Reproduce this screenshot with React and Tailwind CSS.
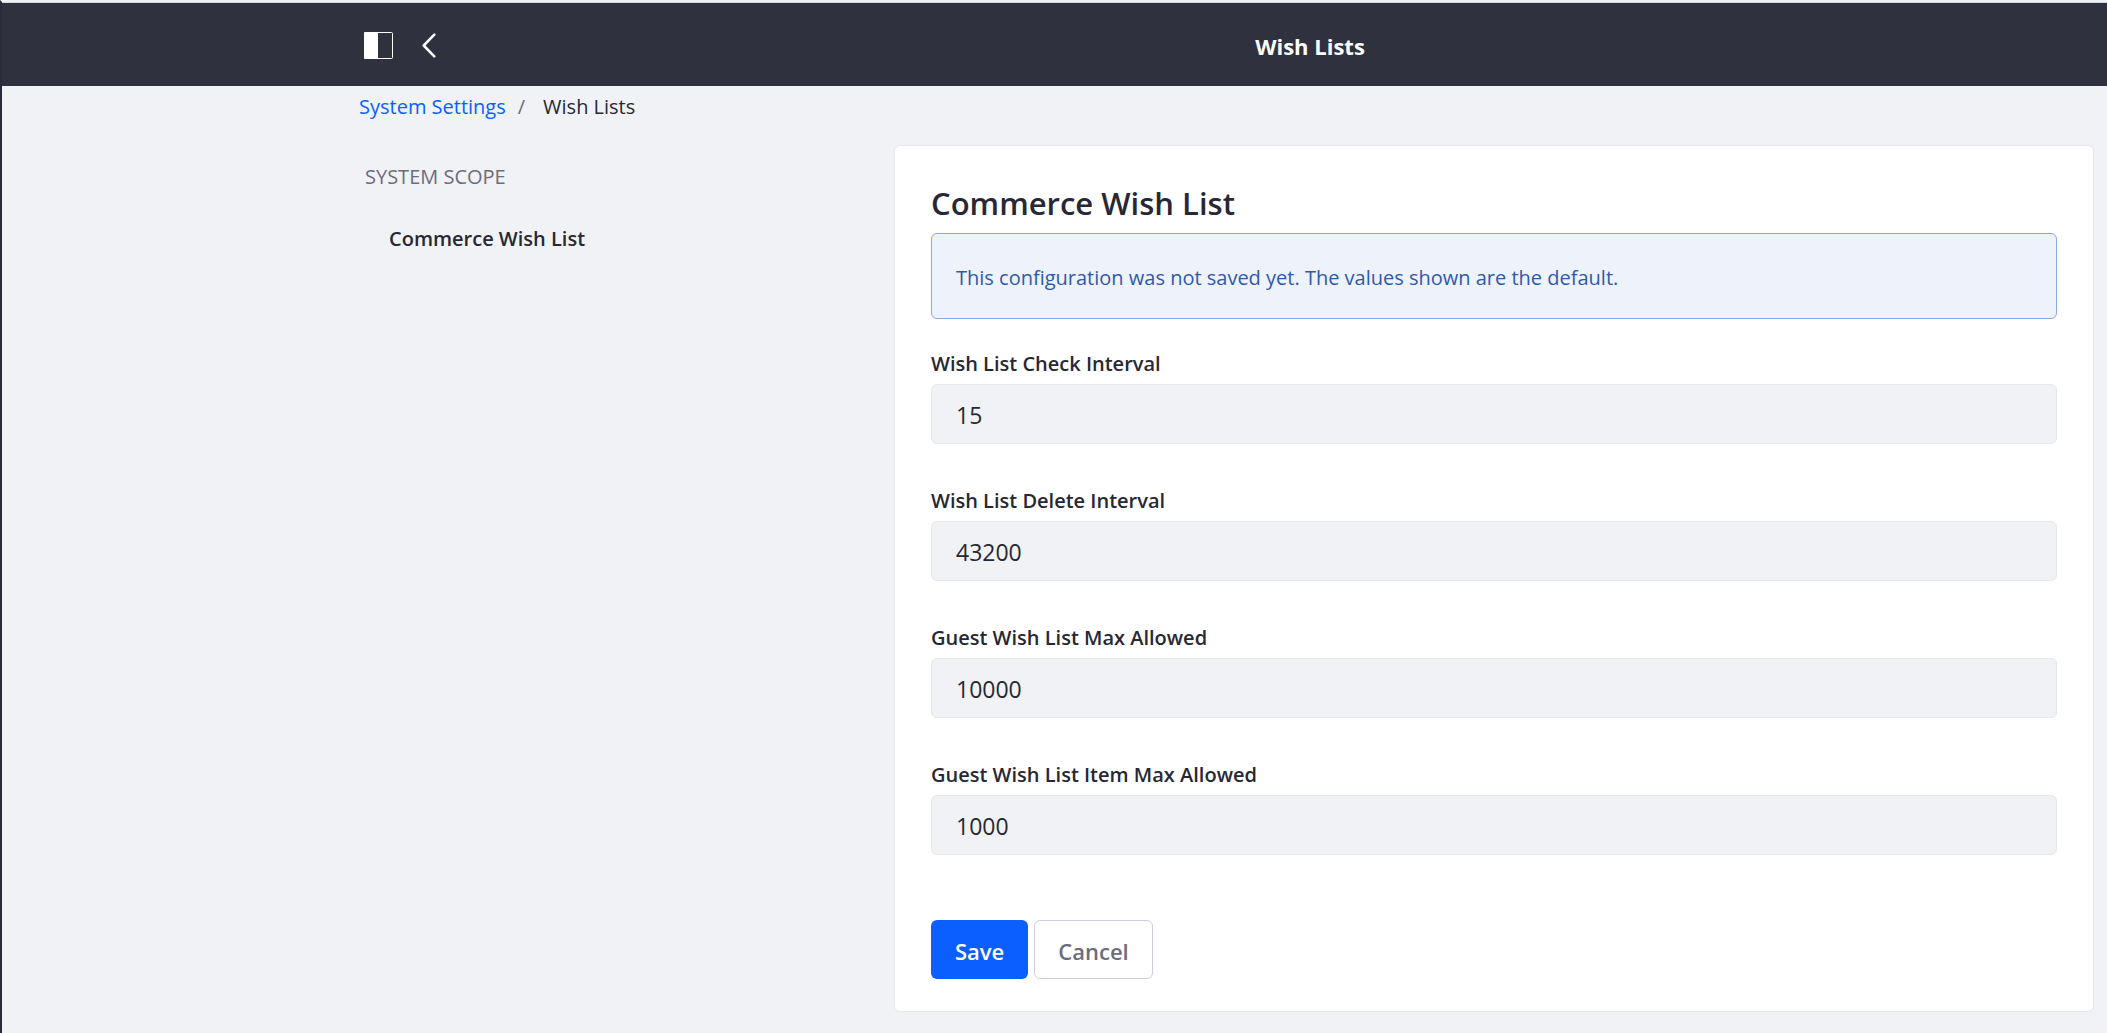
import React from "react";

const fields = [
  { id: "check-interval", label: "Wish List Check Interval", value: "15" },
  { id: "delete-interval", label: "Wish List Delete Interval", value: "43200" },
  { id: "guest-max", label: "Guest Wish List Max Allowed", value: "10000" },
  { id: "guest-item-max", label: "Guest Wish List Item Max Allowed", value: "1000" },
];

function PanelIcon() {
  return (
    <svg width="29" height="27" viewBox="0 0 29 27" aria-hidden="true">
      <rect x="0.5" y="0.5" width="28" height="26" rx="1" fill="none" stroke="#fff" />
      <path d="M1 0h13v27H1a1 1 0 0 1-1-1V1a1 1 0 0 1 1-1z" fill="#fff" />
    </svg>
  );
}

function BackIcon() {
  return (
    <svg width="14" height="25" viewBox="0 0 14 25" fill="none" stroke="#fff" strokeWidth="2.5" strokeLinecap="round" strokeLinejoin="round" aria-hidden="true">
      <path d="M12.3 1.7 1.7 12.5l10.6 10.8" />
    </svg>
  );
}

function Header() {
  return (
    <header className="flex h-[84px] items-center border-t border-[#d8d8dc] bg-[#30313f] pt-0.5 pl-[362px] text-white">
      <div className="flex w-[149px] shrink-0 items-center gap-[29px]">
        <button type="button" aria-label="Toggle product menu">
          <PanelIcon />
        </button>
        <button type="button" aria-label="Back">
          <BackIcon />
        </button>
      </div>
      <h1 className="flex-1 text-center text-[22px] leading-8 font-bold">Wish Lists</h1>
    </header>
  );
}

function Field({ id, label, value }) {
  return (
    <div>
      <label htmlFor={id} className="block pb-1 text-[20px] leading-8 font-semibold">
        {label}
      </label>
      <input
        id={id}
        type="text"
        defaultValue={value}
        className="block h-[60px] w-full rounded-md border border-[#e7e7ed] bg-[#f1f2f5] px-6 pt-0.5 text-[23px]"
      />
    </div>
  );
}

export default function App() {
  return (
    <div className="min-h-screen border-t-2 border-l-2 border-t-[#f1f2f5] border-l-[#2b2a3d] bg-[#f1f2f5] font-['Open_Sans','Noto_Sans',sans-serif] text-[#272833]">
      <Header />
      <nav aria-label="Breadcrumb" className="pt-[5px] pl-[357px]">
        <ol className="flex text-[20px] leading-8">
          <li>
            <a href="#settings" className="text-[#0b5fff]">System Settings</a>
          </li>
          <li aria-hidden="true" className="pr-[18px] pl-3 text-[#6b6c7e]">/</li>
          <li aria-current="page">Wish Lists</li>
        </ol>
      </nav>
      <div className="grid grid-cols-[529fr_1200fr] pt-[22px] pr-[13px] pb-5 pl-[363px]">
        <aside className="pt-4">
          <h2 className="text-[20px] leading-8 text-[#6b6c7e]">SYSTEM SCOPE</h2>
          <a href="#wish-list" className="mt-[30px] ml-6 block text-[20px] leading-8 font-semibold">
            Commerce Wish List
          </a>
        </aside>
        <main className="rounded-md border border-[#e7e7ed] bg-white px-9 pt-[37px] pb-8">
          <h2 className="text-[31px] leading-10 font-semibold">Commerce Wish List</h2>
          <div role="status" className="mt-[10px] rounded-md border border-[#89a7e0] bg-[#eef2fa] px-6 pt-7 pb-6 text-[20px] leading-8 text-[#2e5aac]">
            This configuration was not saved yet. The values shown are the default.
          </div>
          <form onSubmit={(event) => event.preventDefault()}>
            <div className="mt-[29px] flex flex-col gap-[41px]">
              {fields.map((field) => (
                <Field key={field.id} {...field} />
              ))}
            </div>
            <div className="mt-[65px] flex gap-1.5">
              <button type="submit" className="h-[59px] rounded-md bg-[#0b5fff] px-6 pt-1 text-[22px] font-semibold text-white">
                Save
              </button>
              <button type="button" className="h-[59px] rounded-md border border-[#cdced9] bg-white px-[23px] pt-1 text-[22px] font-semibold text-[#6b6c7e]">
                Cancel
              </button>
            </div>
          </form>
        </main>
      </div>
    </div>
  );
}
